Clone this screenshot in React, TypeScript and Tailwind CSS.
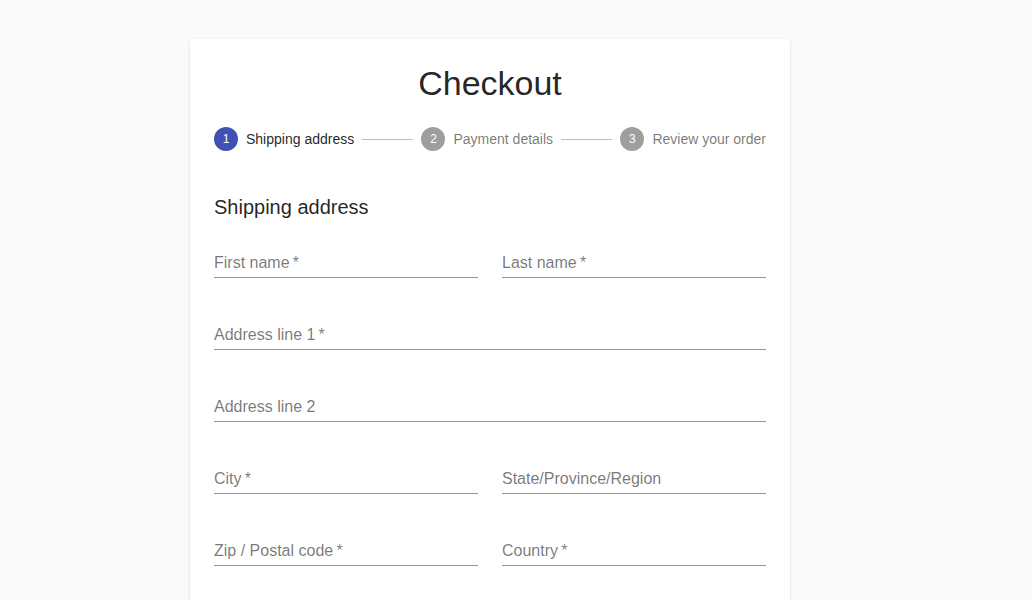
import React from "react";

function Field({ label, full }: { label: string; full?: boolean }) {
  return (
    <div className={full ? "col-span-2 h-[48px] pt-[16px]" : "h-[48px] pt-[16px]"}>
      <div className="h-[32px] pt-[5px] border-b border-[rgba(0,0,0,0.42)] text-[16px] leading-[23px] text-[rgba(0,0,0,0.54)]">
        {label}
      </div>
    </div>
  );
}

function Step({ n, label, active }: { n: number; label: string; active?: boolean }) {
  return (
    <div className="flex items-center">
      <div
        className={
          active
            ? "w-6 h-6 rounded-full bg-[#3f51b5] text-white text-[12px] flex items-center justify-center"
            : "w-6 h-6 rounded-full bg-[rgba(0,0,0,0.38)] text-white text-[12px] flex items-center justify-center"
        }
      >
        {n}
      </div>
      <div
        className={
          active
            ? "ml-2 text-[14px] leading-[20px] text-[rgba(0,0,0,0.87)]"
            : "ml-2 text-[14px] leading-[20px] text-[rgba(0,0,0,0.54)]"
        }
      >
        {label}
      </div>
    </div>
  );
}

export default function App() {
  const ast = "\u2009*";
  return (
    <div
      className="h-screen overflow-hidden bg-[#fafafa] pl-[190px] pt-[39px]"
      style={{ fontFamily: '"Liberation Sans", Arial, sans-serif' }}
    >
      <div className="w-[600px] h-[600px] bg-white rounded-[4px] shadow-[0_2px_1px_-1px_rgba(0,0,0,0.2),0_1px_1px_0_rgba(0,0,0,0.14),0_1px_3px_0_rgba(0,0,0,0.12)] p-6">
        <h1 className="text-center text-[34px] leading-[40px] text-[rgba(0,0,0,0.87)]">Checkout</h1>
        <div className="pt-[24px] pb-[40px] flex items-center">
          <Step n={1} label="Shipping address" active />
          <div className="flex-1 mx-2 border-t border-[#bdbdbd]" />
          <Step n={2} label="Payment details" />
          <div className="flex-1 mx-2 border-t border-[#bdbdbd]" />
          <Step n={3} label="Review your order" />
        </div>
        <h2 className="text-[20px] leading-[32px] text-[rgba(0,0,0,0.87)] mb-[7px]">Shipping address</h2>
        <div className="grid grid-cols-2 gap-6">
          <Field label={"First name" + ast} />
          <Field label={"Last name" + ast} />
          <Field label={"Address line 1" + ast} full />
          <Field label="Address line 2" full />
          <Field label={"City" + ast} />
          <Field label="State/Province/Region" />
          <Field label={"Zip / Postal code" + ast} />
          <Field label={"Country" + ast} />
        </div>
      </div>
    </div>
  );
}
